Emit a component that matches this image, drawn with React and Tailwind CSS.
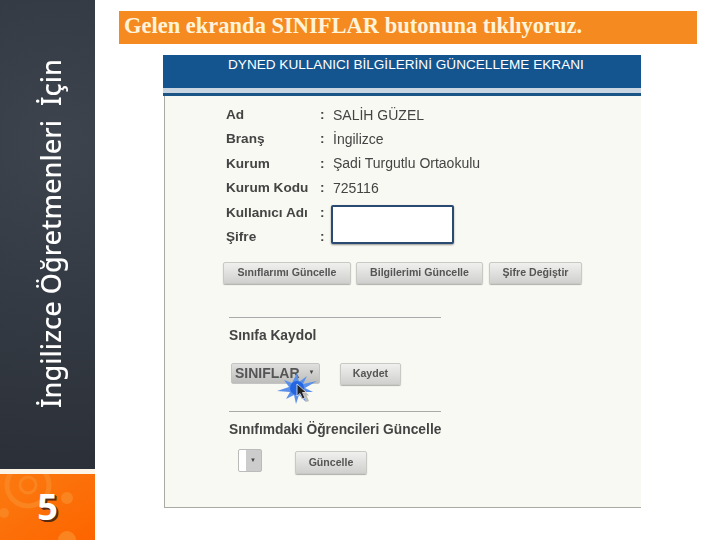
import React from 'react';

const fields = [
  { label: 'Ad', value: 'SALİH GÜZEL' },
  { label: 'Branş', value: 'İngilizce' },
  { label: 'Kurum', value: 'Şadi Turgutlu Ortaokulu' },
  { label: 'Kurum Kodu', value: '725116' },
  { label: 'Kullanıcı Adı', value: '' },
  { label: 'Şifre', value: '' },
];

const btn = 'h-[22px] flex items-center justify-center rounded-[2px] border border-[#c8c8c4] bg-gradient-to-b from-[#f0f0ee] to-[#d0d0ce] shadow-[0_1px_1px_rgba(0,0,0,0.3)] text-[10.6px] font-bold text-[#555]';

const Burst = () => (
  <svg className="absolute left-[44px] top-[7px] w-[44px] h-[36px] blur-[0.7px]" viewBox="0 0 44 36">
    <path d="M22 3 L24 12 L32 6 L28 14 L42 11 L30 18 L38 22 L28 22 L31 32 L24 25 L21 34 L19 25 L11 29 L15 22 L2 21 L14 17 L9 10 L17 13 Z" fill="#5a90ea" />
    <circle cx="22" cy="18" r="7" fill="#2466e2" />
  </svg>
);

const Cursor = () => (
  <svg className="absolute left-[65px] top-[20px] w-[13px] h-[19px]" viewBox="0 0 13 19">
    <path d="M5 4 L5 16 L8 13.5 L10.5 19 L13 18 L10.5 12.5 L13 12.5 Z" fill="#000" opacity="0.25" />
    <path d="M1 1 L1 13 L4 10.5 L6.5 16 L9 15 L6.5 9.5 L10.5 9.5 Z" fill="#222" stroke="#eee" strokeWidth="0.8" />
  </svg>
);

export default function App() {
  return (
    <div className="flex w-[720px] h-[540px] bg-white overflow-hidden font-['Liberation_Sans',sans-serif]">
      {/* left band */}
      <aside className="w-[95px] h-full flex flex-col shrink-0">
        <div className="h-[469px] bg-[radial-gradient(circle_at_60%_30%,#3d444e,#2b3038)] flex justify-end items-start pr-[27px] pt-[59px]">
          <span className="[writing-mode:vertical-rl] rotate-180 text-white text-[27px] font-medium leading-[34px] whitespace-pre font-['Noto_Sans',sans-serif]">
            İngilizce Öğretmenleri  İçin
          </span>
        </div>
        <div className="h-[5px] bg-[#fdf6e8]" />
        <div className="relative flex-1 bg-gradient-to-br from-[#fb7a10] to-[#fd6400] overflow-hidden flex items-center justify-center">
          <svg className="absolute left-0 top-0 w-[95px] h-[66px]" viewBox="0 0 95 66" fill="none">
            <circle cx="28" cy="11" r="8" stroke="#fa8420" strokeWidth="3" />
            <circle cx="28" cy="11" r="21" stroke="#fa8420" strokeWidth="5" />
            <circle cx="67" cy="24" r="6" fill="#fa8420" />
            <circle cx="4" cy="39" r="5" fill="#fa8420" />
            <circle cx="67" cy="66" r="9" fill="#fa8420" />
          </svg>
          <span className="relative text-white text-[36px] font-bold leading-none [text-shadow:1px_1px_0_#5a2a10,2px_2px_0_#5a2a10] font-['Noto_Sans',sans-serif]">5</span>
        </div>
      </aside>

      <main className="flex-1 flex flex-col pt-[11px]">
        <div className="ml-[24px] w-[578px] h-[33px] bg-[#f58a21] pl-[5px] flex items-center">
          <h1 className="text-[#fff4d9] text-[22.5px] font-bold leading-none pb-[3px] font-['Liberation_Serif',serif]">
            Gelen ekranda SINIFLAR butonuna tıklıyoruz.
          </h1>
        </div>

        {/* pasted screen */}
        <section className="ml-[68px] mt-[11px] w-[478px] h-[453px] flex flex-col">
          <div className="h-[33px] bg-[#15558f] text-white text-[13.6px] leading-none pl-[65px] pt-[3px]">
            DYNED KULLANICI BİLGİLERİNİ GÜNCELLEME EKRANI
          </div>
          <div className="h-[5px] bg-[#c9d5e0]" />
          <div className="h-[3px] bg-[#1b5585]" />
          <div className="flex-1 ml-px bg-[#f9f9f3] border-l border-b border-[#aaaaa5] flex flex-col pl-[61px] blur-[0.3px]">
            <div className="relative mt-[7px] flex flex-col">
              {fields.map((f) => (
                <div key={f.label} className="h-[24.4px] flex items-center text-[13.6px] text-[#444]">
                  <span className="w-[94px] font-bold whitespace-nowrap">{f.label}</span>
                  <span className="w-[13px] font-bold">:</span>
                  <span className="text-[14px]">{f.value}</span>
                </div>
              ))}
              <div className="absolute left-[105px] top-[102px] w-[123px] h-[39px] bg-white border-[2.5px] border-[#2a4a72] rounded-[2px] shadow-[0_1px_2px_rgba(0,0,0,0.4)]" />
            </div>

            <div className="-ml-[3px] mt-[13px] flex gap-[5px]">
              <div className={`${btn} w-[128px]`}>Sınıflarımı Güncelle</div>
              <div className={`${btn} w-[127px]`}>Bilgilerimi Güncelle</div>
              <div className={`${btn} w-[93px] ml-px`}>Şifre Değiştir</div>
            </div>

            <div className="ml-[3px] mt-[33px] w-[212px] border-t border-[#aaa]" />
            <h2 className="ml-[3px] mt-[9px] text-[13.8px] leading-[17px] font-bold text-[#444]">Sınıfa Kaydol</h2>

            <div className="relative mt-[19px] ml-[5px] flex">
              <div className="w-[89px] h-[21px] rounded-[2px] bg-gradient-to-b from-[#e0e0de] to-[#bdbdbb] border border-[#c4c4c4] flex items-center pl-[3px] text-[14px] font-bold text-[#555]">
                SINIFLAR
                <span className="ml-[9px] mb-[3px] text-[6px] text-[#444]">▼</span>
              </div>
              <div className={`${btn} ml-[20px] w-[61px]`}>Kaydet</div>
              <Burst />
              <Cursor />
            </div>

            <div className="ml-[3px] mt-[26px] w-[212px] border-t border-[#aaa]" />
            <h2 className="ml-[3px] mt-[9px] text-[13.8px] leading-[17px] font-bold text-[#444] whitespace-nowrap">Sınıfımdaki Öğrencileri Güncelle</h2>

            <div className="mt-[11px] ml-[12px] flex items-start">
              <div className="w-[24px] h-[23px] rounded-[2px] border border-[#bbb] bg-[linear-gradient(90deg,#fff_0_30%,#ccc_30%_100%)] flex items-center justify-end pr-[5px] text-[6px] text-[#444]">
                ▼
              </div>
              <div className={`${btn} ml-[33px] mt-[2px] w-[72px] h-[23px]`}>Güncelle</div>
            </div>
          </div>
        </section>
      </main>
    </div>
  );
}
